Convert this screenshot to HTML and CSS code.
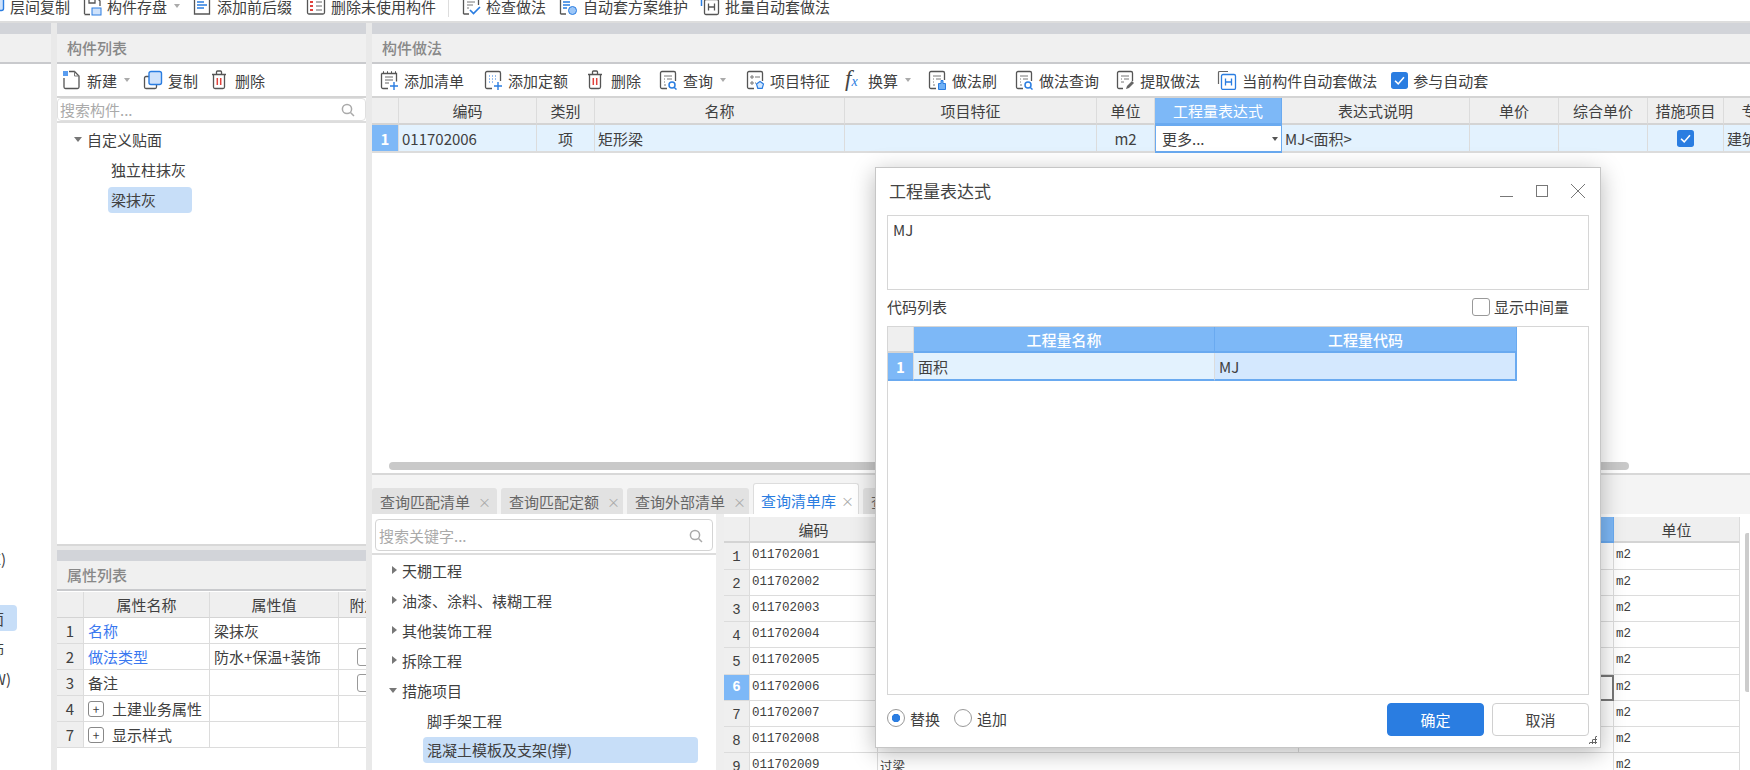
FILE: index.html
```html
<!DOCTYPE html>
<html>
<head>
  <title>工程量表达式</title>
  <link rel="stylesheet" href="styles.css">
</head>
<body>

  <svg class="defs">
    <symbol id="i-list" viewBox="0 0 20 20"><path d="M4 2h1M8 2h1M12 2h1M16 2h1M2.500 3.500h15v8M9 18.500H4a1.500 1.500 0 0 1-1.500-1.500V3.500" fill="none" stroke="#555" stroke-width="1.300"/><path d="M6 7h8M6 10h8M6 13h4" stroke="#666" fill="none"/><path d="M15 12v8M11 16h8" stroke="#2a7de1" stroke-width="1.400"/></symbol>
    <symbol id="i-dots" viewBox="0 0 20 20"><path d="M2.500 12V3a1.500 1.500 0 0 1 1.500-1.500h12A1.500 1.500 0 0 1 17.500 3v8M9 18.500H4A1.500 1.500 0 0 1 2.500 17v-5" fill="none" stroke="#555" stroke-width="1.300"/><path d="M6 6h1M9 6h1M12 6h1M6 9h1M9 9h1M12 9h1M6 12h1M9 12h1" stroke="#2a7de1" stroke-width="1.200"/><path d="M15 12v8M11 16h8" stroke="#2a7de1" stroke-width="1.400"/></symbol>
    <symbol id="i-trash" viewBox="0 0 16 20"><path d="M1 4.500h14M5.500 4.500V2a1 1 0 0 1 1-1h3a1 1 0 0 1 1 1v2.500M2.500 4.500V17a1.500 1.500 0 0 0 1.500 1.500h8a1.500 1.500 0 0 0 1.500-1.500V4.500" fill="none" stroke="#555" stroke-width="1.300"/><path d="M6.300 8v7M9.700 8v7" stroke="#e0423c" stroke-width="1.500"/></symbol>
    <symbol id="i-query" viewBox="0 0 20 20"><path d="M9 18.500H4A1.500 1.500 0 0 1 2.500 17V3A1.500 1.500 0 0 1 4 1.500h12A1.500 1.500 0 0 1 17.500 3v8" fill="none" stroke="#555" stroke-width="1.300"/><path d="M6 6h8M6 9h1M9 9h5M6 12h1M6 15h2" stroke="#777" fill="none"/><circle cx="14" cy="15" r="3" fill="none" stroke="#2a7de1" stroke-width="1.500"/><path d="M16 17.200l2.500 2.300" stroke="#2a7de1" stroke-width="1.500"/></symbol>
    <symbol id="i-feature" viewBox="0 0 20 20"><path d="M9 18.500H4A1.500 1.500 0 0 1 2.500 17V3A1.500 1.500 0 0 1 4 1.500h12A1.500 1.500 0 0 1 17.500 3v8" fill="none" stroke="#555" stroke-width="1.300"/><path d="M6 6h2v2H6zM6 12h2v2H6zM10 7h5M10 13h1" stroke="#777" fill="none"/><path d="M15 11.500l3.500 2.500-1.300 4.300h-4.400L11.500 14z" fill="#d4e8fe" stroke="#2a7de1" stroke-width="1.200"/></symbol>
    <symbol id="i-brush" viewBox="0 0 20 20"><path d="M9 18.500H4A1.500 1.500 0 0 1 2.500 17V3A1.500 1.500 0 0 1 4 1.500h12A1.500 1.500 0 0 1 17.500 3v7" fill="none" stroke="#555" stroke-width="1.300"/><path d="M6 6h8M6 9h1M9 9h5M6 12h1M6 15h2" stroke="#777" fill="none"/><path d="M14 10.500h2v3h2.500v6h-7v-6H14z" fill="#6fb0f5" stroke="#2a7de1"/></symbol>
    <symbol id="i-extract" viewBox="0 0 20 20"><path d="M8 18.500H4A1.500 1.500 0 0 1 2.500 17V3A1.500 1.500 0 0 1 4 1.500h12A1.500 1.500 0 0 1 17.500 3v8" fill="none" stroke="#555" stroke-width="1.300"/><path d="M6 6h8M6 9h1M9 9h5M6 12h3" stroke="#777" fill="none"/><path d="M11 19l1-3 5-5 2 2-5 5z" fill="#666"/></symbol>
    <symbol id="i-auto" viewBox="0 0 20 20"><path d="M1.500 14V2.500a1 1 0 0 1 1-1H11" fill="none" stroke="#666" stroke-width="1.200"/><rect x="4.500" y="4.500" width="14" height="15" rx="1.500" fill="#fff" stroke="#2a7de1" stroke-width="1.300"/><path d="M8.500 8.500v7M14.500 8.500v7M8.500 12h6" stroke="#2a7de1" stroke-width="1.300" fill="none"/></symbol>
    <symbol id="i-autog" viewBox="0 0 20 20"><path d="M1.500 10V2" stroke="#2a7de1" stroke-width="1.500"/><rect x="4.500" y="3.500" width="14" height="15" rx="1.500" fill="#fff" stroke="#555" stroke-width="1.300"/><path d="M8.500 7.500v7M14.500 7.500v7M8.500 11h6" stroke="#555" stroke-width="1.300" fill="none"/></symbol>
    <symbol id="i-new" viewBox="0 0 20 20"><path d="M2 8v9a1.500 1.500 0 0 0 1.500 1.500h12A1.500 1.500 0 0 0 17 17V6l-4.500-4.500H7" fill="none" stroke="#555" stroke-width="1.300"/><path d="M12.500 1.500V6H17" fill="none" stroke="#777"/><path d="M1 1h5v5H1z" fill="#5a9df0"/></symbol>
    <symbol id="i-copy" viewBox="0 0 20 20"><path d="M6 6.500H3A1.500 1.500 0 0 0 1.500 8v9A1.500 1.500 0 0 0 3 18.500h9a1.500 1.500 0 0 0 1.500-1.500v-2" fill="none" stroke="#555" stroke-width="1.300"/><rect x="6" y="1.500" width="12.500" height="13" rx="2" fill="#cfe2fb" stroke="#2a7de1" stroke-width="1.400"/></symbol>
    <symbol id="i-save" viewBox="0 0 20 20"><path d="M2.500 18V3.500A1.500 1.500 0 0 1 4 2h11l3 3v5M2.500 18.500H8M7 2v5h6V2" fill="none" stroke="#555" stroke-width="1.300"/><rect x="10" y="12" width="9" height="7" fill="#cfe2fb" stroke="#2a7de1"/></symbol>
    <symbol id="i-prefix" viewBox="0 0 20 20"><path d="M2.500 4.500v13.500h15V2h-15z" fill="none" stroke="#555" stroke-width="1.300"/><path d="M5 6h7M5 9h10M5 12h7" stroke="#2a7de1" stroke-width="1.300"/></symbol>
    <symbol id="i-unused" viewBox="0 0 20 20"><rect x="1.500" y="2" width="17" height="16" rx="1.500" fill="none" stroke="#555" stroke-width="1.300"/><path d="M4 6h3M4 10h3M4 14h3" stroke="#e0423c" stroke-width="2"/><path d="M10 6h6M10 10h6M10 14h6" stroke="#666"/></symbol>
    <symbol id="i-check" viewBox="0 0 20 20"><path d="M2.500 18V3.500A1.500 1.500 0 0 1 4 2h12a1.500 1.500 0 0 1 1.500 1.500V9M2.500 18H8" fill="none" stroke="#555" stroke-width="1.300"/><path d="M6 6h8M6 9h6M6 12h2" stroke="#777"/><path d="M9 14l3.500 3.500L19 11" fill="none" stroke="#2a7de1" stroke-width="1.700"/></symbol>
    <symbol id="i-scheme" viewBox="0 0 20 20"><path d="M2.500 18V3.500A1.500 1.500 0 0 1 4 2h10M2.500 18H8" fill="none" stroke="#555" stroke-width="1.300"/><path d="M5 6h7M5 9h7M5 12h4" stroke="#2a7de1" stroke-width="1.300"/><circle cx="14.500" cy="14.500" r="4" fill="#9cc6f7" stroke="#2a7de1"/></symbol>
    <symbol id="i-search" viewBox="0 0 14 14"><circle cx="6" cy="6" r="4.600" fill="none" stroke="#aaa" stroke-width="1.500"/><path d="M9.500 9.500L13 13" stroke="#aaa" stroke-width="1.500"/></symbol>
    <symbol id="i-tick" viewBox="0 0 16 16"><rect width="16" height="16" rx="2.500" fill="#2a7de1"/><path d="M3.800 8.200l3 3 5.400-6.200" fill="none" stroke="#fff" stroke-width="1.500"/></symbol>
  </svg>

  <div class="page">

    <div class="topbar">
      <div class="top-items">
        <div class="tool"><svg class="icon"><use href="#i-copy"/></svg>层间复制</div>
        <div class="tool"><svg class="icon"><use href="#i-save"/></svg>构件存盘<span class="caret"></span></div>
        <div class="tool"><svg class="icon"><use href="#i-prefix"/></svg>添加前后缀</div>
        <div class="tool"><svg class="icon"><use href="#i-unused"/></svg>删除未使用构件</div>
        <div class="top-sep"></div>
        <div class="tool"><svg class="icon"><use href="#i-check"/></svg>检查做法</div>
        <div class="tool"><svg class="icon"><use href="#i-scheme"/></svg>自动套方案维护</div>
        <div class="tool"><svg class="icon"><use href="#i-autog"/></svg>批量自动套做法</div>
      </div>
    </div>

    <div class="work">

      <div class="side">
        <div class="strip"></div>
        <div class="title"></div>
        <div class="side-list">
          <div class="side-row end-6">地面(X)</div>
          <div class="side-row end-6"></div>
          <div class="side-row side-row-on end-4"><span>自定义贴面</span></div>
          <div class="side-row end-4">独立柱装饰</div>
          <div class="side-row end-11">楼面(W)</div>
        </div>
      </div>

      <div class="mid">
        <div class="panel mid-top">
          <div class="strip"></div>
          <div class="title">构件列表</div>
          <div class="toolbar mid-tools">
            <div class="tool"><svg class="icon"><use href="#i-new"/></svg>新建<span class="caret"></span></div>
            <div class="tool"><svg class="icon"><use href="#i-copy"/></svg>复制</div>
            <div class="tool tool-trash"><svg class="icon icon-trash"><use href="#i-trash"/></svg>删除</div>
          </div>
          <div class="search search-mid">搜索构件...<svg class="search-icon"><use href="#i-search"/></svg></div>
          <div class="tree tree-mid">
            <div class="node node-1"><span class="arrow-down"></span>自定义贴面</div>
            <div class="node node-2">独立柱抹灰</div>
            <div class="node node-2"><span class="pill pill-mid">梁抹灰</span></div>
          </div>
        </div>

        <div class="panel mid-bottom">
          <div class="strip"></div>
          <div class="title">属性列表</div>
          <div class="grid grid-props">
            <div class="cell head"></div>
            <div class="cell head">属性名称</div>
            <div class="cell head">属性值</div>
            <div class="cell head">附加</div>

            <div class="cell rowhead">1</div>
            <div class="cell link">名称</div>
            <div class="cell">梁抹灰</div>
            <div class="cell"></div>

            <div class="cell rowhead">2</div>
            <div class="cell link">做法类型</div>
            <div class="cell">防水+保温+装饰</div>
            <div class="cell center"><span class="box"></span></div>

            <div class="cell rowhead">3</div>
            <div class="cell">备注</div>
            <div class="cell"></div>
            <div class="cell center"><span class="box"></span></div>

            <div class="cell rowhead">4</div>
            <div class="cell"><span class="plus">+</span>土建业务属性</div>
            <div class="cell"></div>
            <div class="cell"></div>

            <div class="cell rowhead">7</div>
            <div class="cell"><span class="plus">+</span>显示样式</div>
            <div class="cell"></div>
            <div class="cell"></div>
          </div>
        </div>
      </div>

      <div class="right">
        <div class="panel right-top">
          <div class="strip"></div>
          <div class="title">构件做法</div>
          <div class="toolbar right-tools">
            <div class="tool"><svg class="icon"><use href="#i-list"/></svg>添加清单</div>
            <div class="tool"><svg class="icon"><use href="#i-dots"/></svg>添加定额</div>
            <div class="tool tool-trash"><svg class="icon icon-trash"><use href="#i-trash"/></svg>删除</div>
            <div class="tool pull-2"><svg class="icon"><use href="#i-query"/></svg>查询<span class="caret"></span></div>
            <div class="tool"><svg class="icon"><use href="#i-feature"/></svg>项目特征</div>
            <div class="tool pull-4"><span class="fx">f<i>x</i></span>换算<span class="caret"></span></div>
            <div class="tool pull-3"><svg class="icon"><use href="#i-brush"/></svg>做法刷</div>
            <div class="tool pull-2"><svg class="icon"><use href="#i-query"/></svg>做法查询</div>
            <div class="tool pull-3"><svg class="icon"><use href="#i-extract"/></svg>提取做法</div>
            <div class="tool pull-2"><svg class="icon"><use href="#i-auto"/></svg>当前构件自动套做法</div>
            <div class="tool tool-check"><svg class="tick"><use href="#i-tick"/></svg>参与自动套</div>
          </div>
          <div class="grid grid-method">
            <div class="cell head"></div>
            <div class="cell head">编码</div>
            <div class="cell head">类别</div>
            <div class="cell head">名称</div>
            <div class="cell head">项目特征</div>
            <div class="cell head">单位</div>
            <div class="cell head head-on">工程量表达式</div>
            <div class="cell head">表达式说明</div>
            <div class="cell head">单价</div>
            <div class="cell head">综合单价</div>
            <div class="cell head">措施项目</div>
            <div class="cell head">专业</div>

            <div class="cell rowhead rowhead-on">1</div>
            <div class="cell row-on">011702006</div>
            <div class="cell row-on center">项</div>
            <div class="cell row-on">矩形梁</div>
            <div class="cell row-on"></div>
            <div class="cell row-on center">m2</div>
            <div class="cell cell-edit">更多...<span class="caret caret-dark"></span></div>
            <div class="cell row-on">MJ&lt;面积&gt;</div>
            <div class="cell row-on"></div>
            <div class="cell row-on"></div>
            <div class="cell row-on center"><svg class="tick"><use href="#i-tick"/></svg></div>
            <div class="cell row-on">建筑工程</div>
          </div>
          <div class="hscroll"></div>
        </div>

        <div class="right-bottom">
          <div class="tabs">
            <div class="tab">查询匹配清单<span class="tab-x">×</span></div>
            <div class="tab">查询匹配定额<span class="tab-x">×</span></div>
            <div class="tab">查询外部清单<span class="tab-x">×</span></div>
            <div class="tab tab-on">查询清单库<span class="tab-x">×</span></div>
            <div class="tab">查询人材机</div>
          </div>
          <div class="lib">
            <div class="lib-tree">
              <div class="search search-lib">搜索关键字...<svg class="search-icon"><use href="#i-search"/></svg></div>
              <div class="tree">
                <div class="node node-a"><span class="arrow-right"></span>天棚工程</div>
                <div class="node node-a"><span class="arrow-right"></span>油漆、涂料、裱糊工程</div>
                <div class="node node-a"><span class="arrow-right"></span>其他装饰工程</div>
                <div class="node node-a"><span class="arrow-right"></span>拆除工程</div>
                <div class="node node-a"><span class="arrow-down"></span>措施项目</div>
                <div class="node node-b">脚手架工程</div>
                <div class="node node-b"><span class="pill pill-lib">混凝土模板及支架(撑)</span></div>
              </div>
            </div>
            <div class="lib-grid">
              <div class="grid grid-lib">
                <div class="cell head"></div>
                <div class="cell head">编码</div>
                <div class="cell head"></div>
                <div class="cell head head-on"></div>
                <div class="cell head">单位</div>

                <div class="cell rowhead">1</div><div class="cell">011702001</div><div class="cell"></div><div class="cell"></div><div class="cell">m2</div>
                <div class="cell rowhead">2</div><div class="cell">011702002</div><div class="cell"></div><div class="cell"></div><div class="cell">m2</div>
                <div class="cell rowhead">3</div><div class="cell">011702003</div><div class="cell"></div><div class="cell"></div><div class="cell">m2</div>
                <div class="cell rowhead">4</div><div class="cell">011702004</div><div class="cell"></div><div class="cell"></div><div class="cell">m2</div>
                <div class="cell rowhead">5</div><div class="cell">011702005</div><div class="cell"></div><div class="cell"></div><div class="cell">m2</div>
                <div class="cell rowhead rowhead-on">6</div><div class="cell">011702006</div><div class="cell"></div><div class="cell cell-current"></div><div class="cell">m2</div>
                <div class="cell rowhead">7</div><div class="cell">011702007</div><div class="cell"></div><div class="cell"></div><div class="cell">m2</div>
                <div class="cell rowhead">8</div><div class="cell">011702008</div><div class="cell"></div><div class="cell"></div><div class="cell">m2</div>
                <div class="cell rowhead">9</div><div class="cell">011702009</div><div class="cell cell-open">过梁</div><div class="cell"></div><div class="cell">m2</div>
              </div>
              <div class="vscroll"></div>
            </div>
          </div>
        </div>
      </div>
    </div>
  </div>

  <div class="dialog">
    <div class="dialog-title">
      <span>工程量表达式</span>
      <div class="win-btns">
        <span class="win-min"></span>
        <span class="win-max"></span>
        <span class="win-close"></span>
      </div>
    </div>
    <div class="expr">MJ</div>
    <div class="code-bar">
      <span>代码列表</span>
      <label class="mid-check"><span class="box box-big"></span>显示中间量</label>
    </div>
    <div class="code-box">
      <div class="grid grid-code">
        <div class="cell head"></div>
        <div class="cell head head-on">工程量名称</div>
        <div class="cell head head-on">工程量代码</div>
        <div class="cell rowhead rowhead-on">1</div>
        <div class="cell row-on">面积</div>
        <div class="cell row-sel">MJ</div>
      </div>
    </div>
    <div class="dialog-foot">
      <label class="radio-item"><span class="radio radio-on"></span>替换</label>
      <label class="radio-item"><span class="radio"></span>追加</label>
      <button class="btn btn-primary">确定</button>
      <button class="btn">取消</button>
    </div>
    <div class="grip"></div>
  </div>

</body>
</html>
```

FILE: styles.css
```css
* {
  box-sizing: border-box;
}

body {
  margin: 0;
  width: 1750px;
  height: 770px;
  overflow: hidden;
  position: relative;
  background-color: #fff;
  font-family: "Noto Sans CJK SC", "Noto Sans", sans-serif;
  font-size: 15px;
  color: #404040;
}

.defs {
  width: 0;
  height: 0;
  position: absolute;
}

.page {
  height: 770px;
  display: flex;
  flex-direction: column;
}

.icon {
  width: 20px;
  height: 20px;
  flex: none;
}

.icon-trash {
  width: 16px;
}

.tick {
  width: 17px;
  height: 17px;
  flex: none;
}

.tool {
  display: flex;
  align-items: center;
  gap: 5px;
  white-space: nowrap;
}

.tool-trash {
  gap: 8px;
}

.pull-2 {
  margin-left: -2px;
}

.pull-3 {
  margin-left: -3px;
}

.pull-4 {
  margin-left: -4px;
}

.caret {
  width: 0;
  height: 0;
  margin-left: 2px;
  border-left: 3px solid transparent;
  border-right: 3px solid transparent;
  border-top: 4px solid #aaa;
}

.caret-dark {
  margin-left: auto;
  margin-right: 3px;
  border-top-color: #555;
}

/* top ribbon, its upper part is cut off by the window */
.topbar {
  height: 23px;
  flex: none;
  overflow: hidden;
  background-color: #fff;
  border-bottom: 2px solid #ddd;
}

.top-items {
  height: 30px;
  margin-top: -9px;
  margin-left: -15px;
  display: flex;
  align-items: center;
  gap: 12px;
}

.top-items .tool:nth-child(4) {
  margin-left: 2px;
}

.top-sep {
  width: 1px;
  height: 22px;
  background-color: #ddd;
}

.work {
  flex: 1;
  min-height: 0;
  display: flex;
  gap: 6px;
  background-color: #e9e9e9;
}

.strip {
  height: 11px;
  flex: none;
  background-color: #d2d4d9;
}

.title {
  height: 30px;
  flex: none;
  padding-left: 10px;
  line-height: 27px;
  font-weight: 500;
  color: #888;
  background-color: #f0f0f0;
  border-bottom: 2px solid #c9cacd;
}

.panel {
  display: flex;
  flex-direction: column;
  overflow: hidden;
  background-color: #fff;
}

/* far left column */
.side {
  width: 51px;
  flex: none;
  overflow: hidden;
  display: flex;
  flex-direction: column;
  background-color: #fff;
}

.side-list {
  margin-top: 479px;
}

.side-row {
  height: 30px;
  display: flex;
  justify-content: flex-end;
  align-items: center;
  white-space: nowrap;
}

.end-4 {
  width: 4px;
}

.end-6 {
  width: 6px;
}

.end-11 {
  width: 11px;
}

.side-row-on {
  width: 17px;
  padding-right: 13px;
  height: 26px;
  margin: 2px 0;
  background-color: #c7def8;
  border-radius: 0 4px 4px 0;
}

/* middle column */
.mid {
  width: 309px;
  flex: none;
  display: flex;
  flex-direction: column;
  gap: 4px;
}

.mid-top {
  height: 523px;
  flex: none;
  border-bottom: 2px solid #d8d8d8;
}

.mid-bottom {
  flex: 1;
}

.toolbar {
  height: 34px;
  flex: none;
  display: flex;
  align-items: center;
  background-color: #fff;
  border-bottom: 2px solid #d4d4d4;
}

.mid-tools {
  padding-left: 5px;
  gap: 13px;
}

.search {
  position: relative;
  display: flex;
  align-items: center;
  flex: none;
  color: #aaa;
  background-color: #fff;
  border: 1px solid #e0e0e0;
  border-radius: 4px;
}

.search-icon {
  position: absolute;
  width: 14px;
  height: 14px;
}

.search-mid {
  height: 23px;
  padding-left: 2px;
}

.search-mid .search-icon {
  right: 10px;
  top: 4px;
}

.tree {
  flex: 1;
  color: #404040;
}

.tree-mid {
  padding-top: 1px;
  border-top: 2px solid #ddd;
}

.node {
  height: 30px;
  display: flex;
  align-items: center;
  white-space: nowrap;
}

.node-1 {
  padding-left: 17px;
}

.node-2 {
  padding-left: 54px;
}

.node-a {
  padding-left: 20px;
}

.node-a .arrow-down {
  margin-left: -3px;
}

.node-b {
  padding-left: 55px;
}

.pill {
  height: 26px;
  line-height: 26px;
  padding: 0 3px;
  border-radius: 4px;
  background-color: #c7def8;
}

.pill-mid {
  width: 84px;
  margin-left: -3px;
  margin-top: 1px;
}

.pill-lib {
  width: 275px;
  margin-left: -4px;
  padding-left: 4px;
}

.arrow-down {
  width: 0;
  height: 0;
  margin-right: 5px;
  border-left: 4px solid transparent;
  border-right: 4px solid transparent;
  border-top: 5px solid #777;
}

.arrow-right {
  width: 0;
  height: 0;
  margin-right: 5px;
  border-top: 4px solid transparent;
  border-bottom: 4px solid transparent;
  border-left: 5px solid #777;
}

/* tables */
.grid {
  display: grid;
  grid-auto-rows: 26px;
  flex: none;
}

.cell {
  min-width: 0;
  padding-left: 4px;
  display: flex;
  align-items: center;
  overflow: hidden;
  white-space: nowrap;
  background-color: #fff;
  border-right: 1px solid #dcdcdc;
  border-bottom: 1px solid #dcdcdc;
}

.head {
  padding-left: 0;
  justify-content: center;
  background-color: #efefef;
  border-bottom: 2px solid #d4d4d4;
}

.head-on {
  color: #fff;
  background-color: #7db8f7;
  border-right-color: #6aaaf0;
  border-bottom-color: #6aaaf0;
}

.rowhead {
  padding-left: 0;
  justify-content: center;
  background-color: #efefef;
}

.rowhead-on {
  color: #fff;
  font-weight: 700;
  background-color: #7db8f7;
}

.center {
  padding-left: 0;
  justify-content: center;
}

.row-on {
  background-color: #e3f2fe;
}

.row-sel {
  background-color: #d4e8fe;
}

.link {
  color: #3a78f0;
}

.box {
  width: 16px;
  height: 18px;
  flex: none;
  border: 1px solid #999;
  border-radius: 3px;
  background-color: #fff;
}

.plus {
  width: 16px;
  height: 16px;
  margin-right: 8px;
  display: flex;
  align-items: center;
  justify-content: center;
  font-size: 12px;
  border: 1px solid #888;
  border-radius: 3px;
}

.grid-props {
  grid-template-columns: 27px 126px 129px 52px;
  grid-template-rows: 27px;
}

.grid-props .head {
  border-bottom-width: 1px;
  margin-top: 1px;
}

/* right column */
.right {
  flex: 1;
  min-width: 0;
  display: flex;
  flex-direction: column;
}

.right-top {
  height: 452px;
  flex: none;
  border-bottom: 2px solid #d8d8d8;
}

.right-tools {
  padding-left: 7px;
  gap: 19px;
}

.fx {
  width: 18px;
  font-family: "Liberation Serif", serif;
  font-style: italic;
  font-size: 23px;
  line-height: 20px;
  color: #444;
}

.fx i {
  font-size: 14px;
  color: #2a7de1;
}

.tool-check {
  margin-left: -5px;
  gap: 5px;
}

.grid-method {
  grid-template-columns: 27px 138px 58px 250px 252px 58px 127px 188px 89px 89px 76px 66px;
  grid-template-rows: 27px 28px;
  overflow: hidden;
}

.grid-method .cell {
  padding-left: 3px;
}

.grid-method .head,
.grid-method .rowhead,
.grid-method .center {
  padding-left: 0;
}

.grid-method .row-on {
  border-bottom-width: 2px;
}

.grid-method .rowhead-on {
  border-bottom: 2px solid #dcdcdc;
}

.grid-method .cell-edit {
  padding-left: 6px;
  border: 1px solid #6aaaf0;
  border-bottom-width: 2px;
}

.hscroll {
  width: 1240px;
  height: 8px;
  margin-top: auto;
  margin-bottom: 3px;
  margin-left: 17px;
  border-radius: 4px;
  background-color: #c9c9c9;
}

.right-bottom {
  flex: 1;
  min-height: 0;
  display: flex;
  flex-direction: column;
  background-color: #eee;
}

.tabs {
  height: 39px;
  flex: none;
  display: flex;
  align-items: flex-end;
  gap: 4px;
  background-color: #f4f4f4;
}

.tab {
  height: 26px;
  width: 122px;
  padding-left: 8px;
  display: flex;
  align-items: center;
  white-space: nowrap;
  color: #666;
  background-color: #e2e2e2;
  border-radius: 3px 3px 0 0;
}

.tab:first-child {
  width: 125px;
}

.tab-x {
  margin-left: 8px;
  font-size: 13px;
  color: #aaa;
}

.tab-on {
  width: 106px;
  height: 31px;
  padding-top: 2px;
  padding-left: 7px;
  color: #2a7de1;
  background-color: #fff;
  border: 1px solid #ddd;
  border-bottom: none;
}

.tab-on .tab-x {
  margin-left: 5px;
}

.lib {
  flex: 1;
  min-height: 0;
  display: flex;
  gap: 8px;
}

.lib-tree {
  width: 344px;
  flex: none;
  display: flex;
  flex-direction: column;
  padding-top: 5px;
  background-color: #fff;
}

.search-lib {
  height: 32px;
  margin: 0 3px 2px;
  padding-left: 3px;
  border-color: #d4d4d4;
}

.search-lib .search-icon {
  right: 9px;
  top: 9px;
}

.lib-tree .tree {
  border-top: 2px solid #ddd;
}

.lib-grid {
  flex: 1;
  min-width: 0;
  padding-top: 3px;
  display: flex;
  background-color: #fff;
}

.grid-lib {
  width: 1016px;
  grid-template-columns: 26px 128px 421px 315px 126px;
  grid-auto-rows: 26.25px;
  font-size: 12.5px;
  font-family: "Liberation Mono", "Noto Sans CJK SC", monospace;
}

.grid-lib .cell {
  padding-left: 2px;
  padding-bottom: 1px;
}

.grid-lib .head {
  font-family: "Noto Sans CJK SC", sans-serif;
  font-size: 15px;
  padding: 0;
}

.grid-lib .rowhead {
  font-size: 14px;
  padding: 3px 0 0;
}

.grid-lib .rowhead-on {
  padding: 0;
}

.grid-lib .cell-current {
  border: 2px solid #777;
  border-left: none;
}

.grid-lib .cell-open {
  border-right: none;
}

.vscroll {
  width: 4px;
  height: 159px;
  margin-top: 16px;
  margin-left: 5px;
  border-radius: 2px 0 0 2px;
  background-color: #ccc;
}

/* dialog over the page */
.dialog {
  position: absolute;
  left: 875px;
  top: 167px;
  width: 726px;
  height: 581px;
  padding: 0 11px;
  display: flex;
  flex-direction: column;
  background-color: #fff;
  border: 1px solid #c6c6c6;
  box-shadow: 0 5px 22px rgba(0, 0, 0, 0.28);
}

.dialog-title {
  height: 47px;
  flex: none;
  padding-left: 2px;
  padding-bottom: 2px;
  display: flex;
  align-items: center;
  justify-content: space-between;
  font-size: 17px;
  color: #444;
}

.win-btns {
  display: flex;
  align-items: center;
  gap: 23px;
  margin-right: 4px;
}

.win-min {
  width: 13px;
  height: 12px;
  border-bottom: 1px solid #777;
}

.win-max {
  width: 12px;
  height: 12px;
  border: 1px solid #777;
}

.win-close {
  width: 14px;
  height: 14px;
  background:
    linear-gradient(45deg, transparent 47%, #777 47%, #777 53%, transparent 53%),
    linear-gradient(-45deg, transparent 47%, #777 47%, #777 53%, transparent 53%);
}

.expr {
  height: 75px;
  flex: none;
  padding: 3px 5px;
  border: 1px solid #d6d6d6;
}

.code-bar {
  height: 36px;
  flex: none;
  padding-right: 20px;
  padding-bottom: 3px;
  display: flex;
  align-items: center;
  justify-content: space-between;
}

.mid-check {
  display: flex;
  align-items: center;
  gap: 4px;
}

.box-big {
  width: 18px;
}

.code-box {
  flex: 1;
  min-height: 0;
  border: 1px solid #d6d6d6;
}

.grid-code {
  grid-template-columns: 26px 301px 302px;
  grid-template-rows: 26px 28px;
}

.grid-code .head-on {
  font-weight: 500;
}

.grid-code .row-on,
.grid-code .row-sel,
.grid-code .rowhead-on {
  border-bottom: 2px solid #6aaaf0;
}

.grid-code .row-sel {
  border-right: 2px solid #6aaaf0;
}

.dialog-foot {
  height: 52px;
  flex: none;
  padding-bottom: 4px;
  display: flex;
  align-items: center;
  gap: 9px;
}

.radio-item {
  display: flex;
  align-items: center;
  gap: 5px;
  margin-right: 5px;
  margin-top: -2px;
}

.radio {
  width: 18px;
  height: 18px;
  border: 1px solid #999;
  border-radius: 50%;
  background-color: #fff;
}

.radio-on {
  background: radial-gradient(circle, #2a7de1 0 4px, #fff 4.500px);
}

.btn {
  width: 97px;
  height: 33px;
  font-family: inherit;
  font-size: 15px;
  color: #444;
  background-color: #fff;
  border: 1px solid #d0d0d0;
  border-radius: 4px;
}

.btn-primary {
  margin-left: auto;
  margin-right: -1px;
  color: #fff;
  background-color: #2a7de1;
  border-color: #2a7de1;
}

.grip {
  position: absolute;
  right: 3px;
  bottom: 3px;
  width: 9px;
  height: 9px;
  background-image: radial-gradient(circle, #666 0 1px, transparent 1.200px);
  background-size: 3px 3px;
  clip-path: polygon(100% 0, 100% 100%, 0 100%);
}
```
